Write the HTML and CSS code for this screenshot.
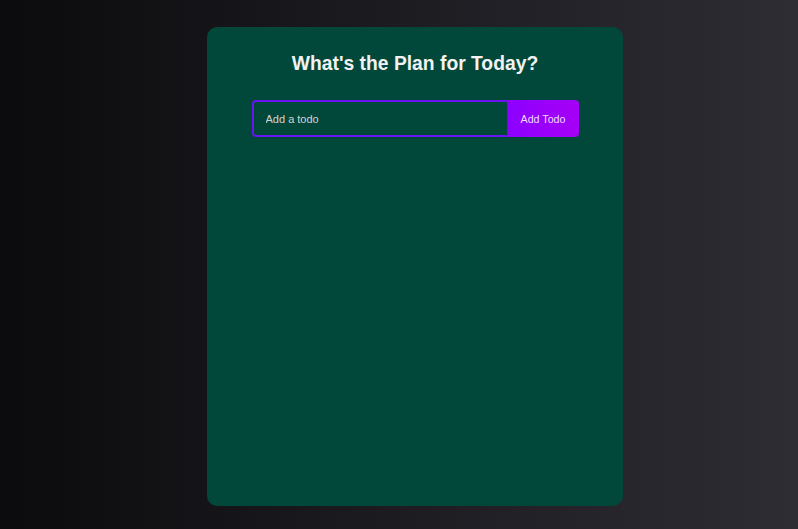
FILE: index.html
```html
<!DOCTYPE html>
<html lang="en">
<head>
<meta charset="utf-8">
<title>Todo</title>
<link rel="stylesheet" href="styles.css">
</head>
<body>
<div class="page">
  <div class="todo-app">
    <h1 class="title">What's the Plan for Today?</h1>
    <form class="todo-form">
      <input class="todo-input" type="text" placeholder="Add a todo">
      <button class="todo-button" type="button">Add Todo</button>
    </form>
  </div>
</div>
</body>
</html>
```
FILE: styles.css
```css
* { box-sizing: border-box; }
html, body { margin: 0; padding: 0; height: 100%; }
body {
  background: linear-gradient(90deg, #0b0b0d 0%, #1b1a1f 45%, #2f2d34 100%);
  font-family: "Liberation Sans", Arial, sans-serif;
}
.page {
  padding: 27px 0 0 207px;
}
.todo-app {
  width: 416px;
  height: 479px;
  background: #01473a;
  border-radius: 10px;
  display: flex;
  flex-direction: column;
  align-items: center;
  padding-top: 25px;
}
.title {
  margin: 0;
  font-size: 19.3px;
  line-height: 23px;
  font-weight: bold;
  color: #f2f2f2;
}
.todo-form {
  margin-top: 25px;
  display: flex;
  width: 327px;
  height: 37px;
}
.todo-input {
  flex: 1;
  min-width: 0;
  height: 37px;
  margin: 0;
  padding: 0 12px;
  border: 2px solid #6a12f0;
  border-right-width: 1px;
  border-radius: 4px 0 0 4px;
  background: transparent;
  color: #e6e6e6;
  font-family: "Liberation Sans", Arial, sans-serif;
  font-size: 11px;
  outline: none;
}
.todo-input::placeholder { color: #d4d4d4; opacity: 1; }
.todo-button {
  width: 71px;
  height: 37px;
  margin: 0;
  padding: 0;
  border: none;
  border-radius: 0 4px 4px 0;
  background: linear-gradient(90deg, #8c00ff 0%, #a600f6 100%);
  color: #f3d8ff;
  font-family: "Liberation Sans", Arial, sans-serif;
  font-size: 10.7px;
  cursor: pointer;
}
```
